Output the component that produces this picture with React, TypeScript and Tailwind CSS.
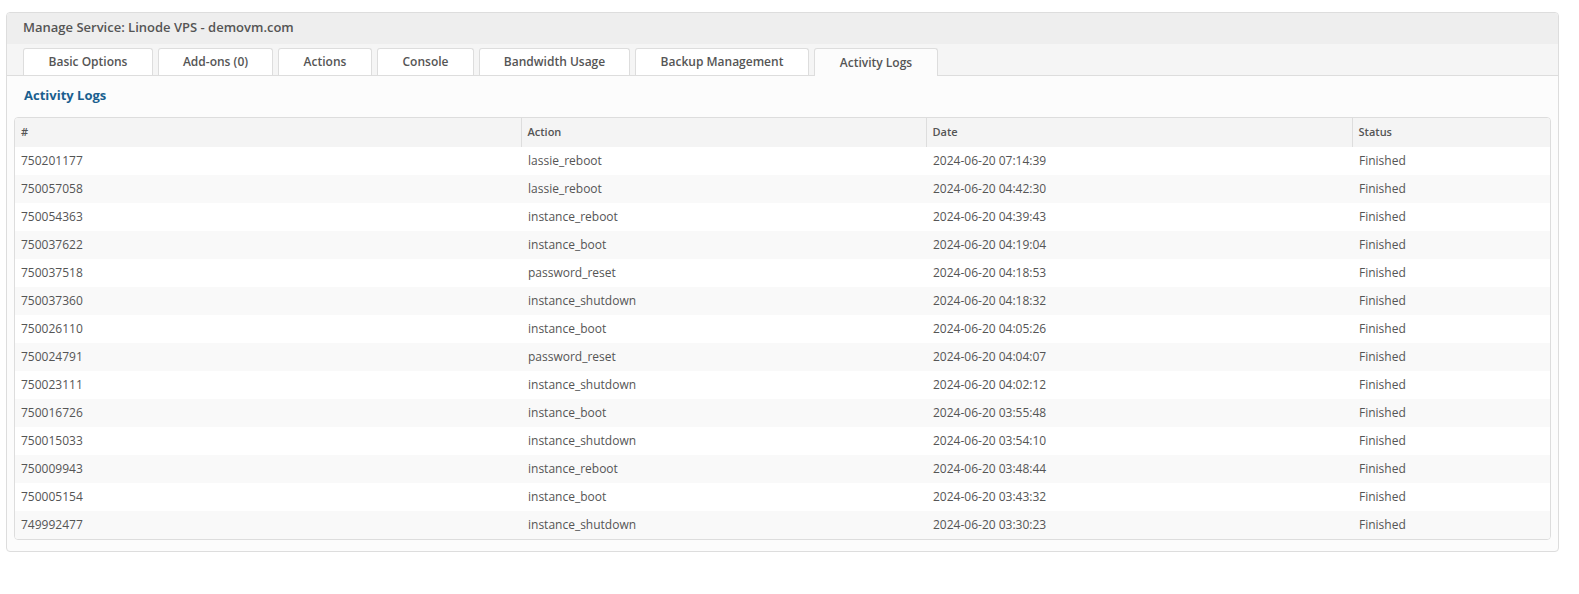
import React from "react";

const tabs = [
  { label: "Basic Options", w: 130 },
  { label: "Add-ons (0)", w: 115 },
  { label: "Actions", w: 94 },
  { label: "Console", w: 97 },
  { label: "Bandwidth Usage", w: 151 },
  { label: "Backup Management", w: 174 },
  { label: "Activity Logs", w: 124, active: true },
];

const rows: [string, string, string, string][] = [
  ["750201177", "lassie_reboot", "2024-06-20 07:14:39", "Finished"],
  ["750057058", "lassie_reboot", "2024-06-20 04:42:30", "Finished"],
  ["750054363", "instance_reboot", "2024-06-20 04:39:43", "Finished"],
  ["750037622", "instance_boot", "2024-06-20 04:19:04", "Finished"],
  ["750037518", "password_reset", "2024-06-20 04:18:53", "Finished"],
  ["750037360", "instance_shutdown", "2024-06-20 04:18:32", "Finished"],
  ["750026110", "instance_boot", "2024-06-20 04:05:26", "Finished"],
  ["750024791", "password_reset", "2024-06-20 04:04:07", "Finished"],
  ["750023111", "instance_shutdown", "2024-06-20 04:02:12", "Finished"],
  ["750016726", "instance_boot", "2024-06-20 03:55:48", "Finished"],
  ["750015033", "instance_shutdown", "2024-06-20 03:54:10", "Finished"],
  ["750009943", "instance_reboot", "2024-06-20 03:48:44", "Finished"],
  ["750005154", "instance_boot", "2024-06-20 03:43:32", "Finished"],
  ["749992477", "instance_shutdown", "2024-06-20 03:30:23", "Finished"],
];

export default function App() {
  return (
    <div
      className="w-[1579px] h-[594px] bg-white pt-[12px] pl-[6px]"
      style={{ fontFamily: '"Open Sans", "Liberation Sans", sans-serif' }}
    >
      <div className="w-[1553px] border border-[#dddddd] rounded-[4px] overflow-hidden bg-[#fcfcfc]">
        <div className="h-[32px] bg-[#eeeeee] flex items-center pl-[16px] text-[13px] font-semibold text-[#555555] -mt-px">
          Manage Service: Linode VPS - demovm.com
        </div>
        <div className="h-[32px] bg-[#f5f5f5] border-b border-[#dddddd] flex items-end pl-[16px] gap-[5px]">
          {tabs.map((t) => (
            <div
              key={t.label}
              style={{ width: t.w }}
              className={
                "rounded-t-[3px] border border-b-0 border-[#dddddd] flex items-center justify-center text-[12px] font-semibold text-[#555555] " +
                (t.active ? "bg-[#fcfcfc] h-[28px] -mb-px" : "bg-white h-[27px]")
              }
            >
              {t.label}
            </div>
          ))}
        </div>
        <div className="px-[7px] pb-[11px]">
          <div className="h-[41px] pb-[2px] flex items-center pl-[10px] text-[13px] font-bold text-[#1a5f8f]">
            Activity Logs
          </div>
          <div className="border border-[#dddddd] rounded-[4px] overflow-hidden">
            <table className="w-full border-collapse table-fixed text-[12px] text-[#555555]">
              <colgroup>
                <col style={{ width: 506 }} />
                <col style={{ width: 405 }} />
                <col style={{ width: 426 }} />
                <col />
              </colgroup>
              <thead>
                <tr className="h-[29px] bg-[#f4f4f4]">
                  <th className="text-left font-semibold text-[11px] pl-[6px]">#</th>
                  <th className="text-left font-semibold text-[11px] pl-[6px] border-l border-[#dddddd]">Action</th>
                  <th className="text-left font-semibold text-[11px] pl-[6px] border-l border-[#dddddd]">Date</th>
                  <th className="text-left font-semibold text-[11px] pl-[6px] border-l border-[#dddddd]">Status</th>
                </tr>
              </thead>
              <tbody>
                {rows.map((r, i) => (
                  <tr key={r[0]} className={"h-[28px] " + (i % 2 === 0 ? "bg-white" : "bg-[#f9f9f9]")}>
                    <td className="pl-[6px]">{r[0]}</td>
                    <td className="pl-[7px]">{r[1]}</td>
                    <td className="pl-[7px]">{r[2]}</td>
                    <td className="pl-[7px]">{r[3]}</td>
                  </tr>
                ))}
              </tbody>
            </table>
          </div>
        </div>
      </div>
    </div>
  );
}
